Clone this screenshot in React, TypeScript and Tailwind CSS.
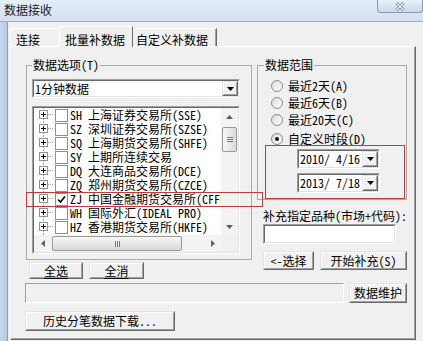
import React from 'react';
import clsx from 'clsx';

type BoxProps = { className?: string; inner?: string; children?: React.ReactNode };

// classic 3D raised button
function Raised({ className, inner, children }: BoxProps) {
  return (
    <div className={clsx('border border-t-[#e3e3e3] border-l-[#e3e3e3] border-r-[#696969] border-b-[#696969] bg-[#f0f0f0]', className)}>
      <div className={clsx('flex h-full w-full items-center justify-center border border-t-white border-l-white border-r-[#a0a0a0] border-b-[#a0a0a0]', inner)}>
        {children}
      </div>
    </div>
  );
}

// classic 3D sunken field
function Sunken({ className, inner, children }: BoxProps) {
  return (
    <div className={clsx('border border-t-[#a0a0a0] border-l-[#a0a0a0] border-r-white border-b-white', className)}>
      <div className={clsx('flex h-full w-full border border-t-[#696969] border-l-[#696969] border-r-[#e3e3e3] border-b-[#e3e3e3] bg-white', inner)}>
        {children}
      </div>
    </div>
  );
}

function DownTri({ color = '#000' }: { color?: string }) {
  return (
    <svg width="7" height="4" viewBox="0 0 7 4">
      <path d="M0 0h7L3.5 4z" fill={color} />
    </svg>
  );
}

function Combo({ text, className }: { text: string; className?: string }) {
  return (
    <Sunken className={className}>
      <span className="flex-1 self-center whitespace-pre pl-[1px]">{text}</span>
      <Raised className="h-full w-[16px]">
        <DownTri />
      </Raised>
    </Sunken>
  );
}

function TreeGlyph() {
  return (
    <svg width="16" height="14" viewBox="0 0 16 14" className="shrink-0">
      <path d="M4.5 0v2M4.5 11v3M9 6.5h6" stroke="#a0a0a0" strokeDasharray="1 1" />
      <rect x="0.5" y="2.5" width="8" height="8" fill="#fff" stroke="#919191" />
      <path d="M2 6.5h5M4.5 4v5" stroke="#000" />
    </svg>
  );
}

const rows = [
  { code: 'SH', name: '上海证券交易所(SSE)' },
  { code: 'SZ', name: '深圳证券交易所(SZSE)' },
  { code: 'SQ', name: '上海期货交易所(SHFE)' },
  { code: 'SY', name: '上期所连续交易' },
  { code: 'DQ', name: '大连商品交易所(DCE)' },
  { code: 'ZQ', name: '郑州期货交易所(CZCE)' },
  { code: 'ZJ', name: '中国金融期货交易所(CFFEX)', checked: true },
  { code: 'WH', name: '国际外汇(IDEAL PRO)' },
  { code: 'HZ', name: '香港期货交易所(HKFE)' },
  { code: 'HK', name: '香港联合交易所(HKEX)' },
];

function TreeRow({ code, name, checked }: { code: string; name: string; checked?: boolean }) {
  return (
    <div className="flex h-[14px] shrink-0 items-center whitespace-pre pl-[5px]">
      <TreeGlyph />
      <span className="flex h-[13px] w-[13px] shrink-0 items-center justify-center border border-[#8e8f8f] bg-white">
        {checked && (
          <svg width="9" height="9" viewBox="0 0 9 9">
            <path d="M1 4.5l2.5 2.5L8 1.5" stroke="#000" strokeWidth="1.6" fill="none" />
          </svg>
        )}
      </span>
      <span className="ml-[2px]">{code} {name}</span>
    </div>
  );
}

function Arrow({ dir }: { dir: 'up' | 'down' | 'left' | 'right' }) {
  const d = {
    up: 'M0 4h7L3.5 0z',
    down: 'M0 0h7L3.5 4z',
    left: 'M4 0v7L0 3.5z',
    right: 'M0 0v7L4 3.5z',
  }[dir];
  const vert = dir === 'up' || dir === 'down';
  return (
    <svg width={vert ? 7 : 4} height={vert ? 4 : 7} viewBox={vert ? '0 0 7 4' : '0 0 4 7'}>
      <path d={d} fill="#606060" />
    </svg>
  );
}

function ListBox() {
  return (
    <Sunken className="mt-[8px] h-[148px] w-[208px]" inner="flex-col overflow-hidden">
      <div className="flex h-[127px]">
        <div className="flex-1 overflow-hidden">
          {rows.map((r) => (
            <TreeRow key={r.code} {...r} />
          ))}
        </div>
        <div className="flex w-[17px] flex-col bg-[#f3f3f3]">
          <div className="flex h-[17px] items-center justify-center">
            <Arrow dir="up" />
          </div>
          <div className="mx-[1px] mt-[2px] flex h-[25px] flex-col items-center justify-center gap-[1px] rounded-[2px] border border-[#9a9a9a] bg-gradient-to-r from-[#f7f7f7] to-[#d9d9d9]">
            <span className="h-px w-[6px] bg-[#7a7a7a]" />
            <span className="h-px w-[6px] bg-[#7a7a7a]" />
            <span className="h-px w-[6px] bg-[#7a7a7a]" />
          </div>
          <div className="flex-1" />
          <div className="flex h-[17px] items-center justify-center">
            <Arrow dir="down" />
          </div>
        </div>
      </div>
      <div className="flex h-[17px] bg-[#f3f3f3]">
        <div className="flex w-[17px] items-center justify-center">
          <Arrow dir="left" />
        </div>
        <div className="my-[1px] ml-[1px] flex w-[130px] items-center justify-center gap-[1px] rounded-[2px] border border-[#9a9a9a] bg-gradient-to-b from-[#f7f7f7] to-[#d9d9d9]">
          <span className="h-[6px] w-px bg-[#7a7a7a]" />
          <span className="h-[6px] w-px bg-[#7a7a7a]" />
          <span className="h-[6px] w-px bg-[#7a7a7a]" />
        </div>
        <div className="flex-1" />
        <div className="flex w-[17px] items-center justify-center">
          <Arrow dir="right" />
        </div>
        <div className="w-[17px] bg-[#f0f0f0]" />
      </div>
    </Sunken>
  );
}

function Radio({ label, selected, className }: { label: string; selected?: boolean; className?: string }) {
  return (
    <div className={clsx('flex h-[17px] items-center pl-[7px]', className)}>
      <span className="flex h-[12px] w-[12px] items-center justify-center rounded-full border border-[#8a8a8a] bg-gradient-to-br from-[#dcdcdc] to-white">
        {selected && <span className="h-[4px] w-[4px] rounded-full bg-[#1a1a1a]" />}
      </span>
      <span className="ml-[5px]">{label}</span>
    </div>
  );
}

export default function App() {
  return (
    <div className="relative h-[341px] w-[423px] overflow-hidden bg-[#f0f0f0] font-['Noto_Sans_Mono_CJK_SC','Noto_Sans_CJK_SC',sans-serif] text-[12px] leading-[14px] text-black">
      {/* title bar */}
      <div className="flex h-[22px] items-start justify-between border-b border-[#9eaec3] bg-gradient-to-b from-[#e4edf8] to-[#d3e0f0]">
        <span className="pl-[4px] pt-[3px] text-[#1e1e1e]">数据接收</span>
        <div className="flex h-[13px] w-[46px] items-center justify-center rounded-b-[4px] border border-t-0 border-[#8897ad] bg-gradient-to-b from-[#e9f0f8] to-[#cad8ea]">
          <svg width="10" height="9" viewBox="0 0 10 9">
            <path d="M1.5 1l7 7M8.5 1l-7 7" stroke="#5b6a80" strokeWidth="2.6" />
            <path d="M1.5 1l7 7M8.5 1l-7 7" stroke="#fff" strokeWidth="1.2" />
          </svg>
        </div>
      </div>

      <div className="flex h-[319px]">
        <div className="w-[8px] border-r border-[#8d9db2] bg-gradient-to-r from-[#c9d8ea] to-[#b6c9e0]" />

        <div className="flex flex-1 flex-col">
          {/* tabs */}
          <div className="flex h-[24px] items-end pl-[2px]">
            <div className="h-[18px] w-[49px] border-l border-t border-white pl-[5px] pt-[4px]">连接</div>
            <div className="relative z-10 -mb-px h-[21px] w-[74px] border-l border-r border-t border-l-white border-t-white border-r-[#696969] bg-[#f0f0f0] pl-[5px] pt-[6px]">
              批量补数据
            </div>
            <div className="h-[18px] w-[84px] border-r border-t border-r-[#696969] border-t-white pl-[3px] pt-[4px] shadow-[inset_-1px_0_0_#a0a0a0]">
              自定义补数据
            </div>
          </div>

          {/* tab panel */}
          <div className="ml-[2px] flex h-[294px] w-[406px] flex-col border border-b-[#696969] border-l-white border-r-[#696969] border-t-white pl-[14px] pt-[11px] shadow-[inset_-1px_-1px_0_#a0a0a0]">
            <div className="flex h-[221px]">
              {/* left column */}
              <div className="ml-[1px] flex w-[226px] flex-col">
                <fieldset className="h-[202px] w-[226px] border border-[#a9a9a9] pb-[5px] pl-[5px]">
                  <legend className="px-[1px] leading-[14px]">数据选项(T)</legend>
                  <Combo text="1分钟数据" className="mt-[7px] h-[19px] w-[208px]" />
                  <ListBox />
                </fieldset>
                <div className="mt-[2px] flex gap-[6px] pl-[3px]">
                  <Raised className="h-[17px] w-[54px]">
                    <span className="underline underline-offset-2">全选</span>
                  </Raised>
                  <Raised className="h-[17px] w-[55px]">
                    <span className="underline underline-offset-2">全消</span>
                  </Raised>
                </div>
              </div>

              {/* right column */}
              <div className="ml-[5px] flex w-[150px] flex-col">
                <fieldset className="h-[142px] w-[150px] border border-[#a9a9a9] pl-[6px] pt-[5px]">
                  <legend className="px-[1px] leading-[14px]">数据范围</legend>
                  <Radio label="最近2天(A)" />
                  <Radio label="最近6天(B)" />
                  <Radio label="最近20天(C)" />
                  <Radio label="自定义时段(D)" selected className="mt-[2px]" />
                  <Combo text="2010/ 4/16" className="ml-[33px] mt-[2px] h-[20px] w-[83px]" />
                  <Combo text="2013/ 7/18" className="ml-[33px] mt-[4px] h-[20px] w-[83px]" />
                </fieldset>
                <div className="mt-[9px] whitespace-nowrap pl-[6px]">补充指定品种(市场+代码):</div>
                <Sunken className="ml-[6px] mt-[1px] h-[20px] w-[133px]" />
                <div className="ml-[6px] mt-[7px] flex gap-[6px]">
                  <Raised className="h-[19px] w-[51px]">&lt;-选择</Raised>
                  <Raised className="h-[19px] w-[87px]">开始补充(S)</Raised>
                </div>
              </div>
            </div>

            {/* status row */}
            <div className="mt-[4px] flex h-[20px] gap-[5px]">
              <div className="h-full w-[319px] border border-b-white border-l-[#a0a0a0] border-r-white border-t-[#a0a0a0]" />
              <Raised className="h-full w-[58px]">数据维护</Raised>
            </div>

            <Raised className="mt-[8px] h-[20px] w-[150px]">历史分笔数据下载...</Raised>
          </div>
        </div>
      </div>

      {/* red annotation boxes */}
      <div className="pointer-events-none absolute left-[26px] top-[192px] h-[15px] w-[237px] border border-[#c23b3b]" />
      <div className="pointer-events-none absolute left-[265px] top-[145px] h-[54px] w-[140px] border border-[#c23b3b]" />
    </div>
  );
}
